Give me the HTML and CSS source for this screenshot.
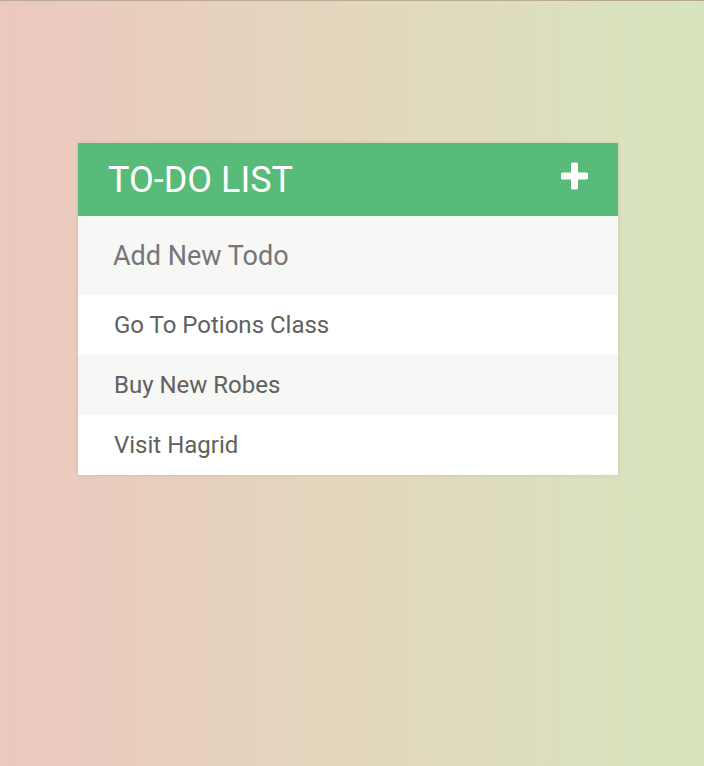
FILE: index.html
```html
<!DOCTYPE html>
<html lang="en">
<head>
<meta charset="utf-8">
<title>Todo List</title>
<link rel="stylesheet" href="styles.css">
</head>
<body>
<div class="topline"></div>
<main class="container">
  <h1 class="title">To-Do List
    <svg class="plus" viewBox="0 0 29 28" width="29" height="28" aria-hidden="true">
      <path d="M12.5 0.5h4a1.5 1.5 0 0 1 1.5 1.5v8.5h8.5a1.5 1.5 0 0 1 1.5 1.5v4a1.5 1.5 0 0 1 -1.5 1.5h-8.5v8.5a1.5 1.5 0 0 1 -1.5 1.5h-4a1.5 1.5 0 0 1 -1.5 -1.5v-8.5h-8.5a1.5 1.5 0 0 1 -1.5 -1.5v-4a1.5 1.5 0 0 1 1.5 -1.5h8.5v-8.5a1.5 1.5 0 0 1 1.5 -1.5z" fill="#fff"/>
    </svg>
  </h1>
  <input class="new-todo" type="text" placeholder="Add New Todo">
  <ul class="todos">
    <li class="todo">Go To Potions Class</li>
    <li class="todo">Buy New Robes</li>
    <li class="todo">Visit Hagrid</li>
  </ul>
</main>
</body>
</html>
```
FILE: styles.css
```css
html, body {
  margin: 0;
  padding: 0;
  height: 100%;
}
body {
  font-family: Roboto, "Liberation Sans", sans-serif;
  background: linear-gradient(to right, #ecc8be, #e3d7bd 50%, #d7e5be);
}
.topline {
  height: 1px;
  background: #b8a992;
}
.container {
  width: 540px;
  margin: 142px 0 0 78px;
  background: #f7f7f5;
  box-shadow: 0 0 4px rgba(0, 0, 0, 0.1);
}
.title {
  margin: 0;
  padding: 16px 30px 14px;
  background: #59bb79;
  color: #fff;
  font-size: 36px;
  font-weight: normal;
  line-height: 43px;
  text-transform: uppercase;
  display: flex;
  justify-content: space-between;
  align-items: center;
}
.plus {
  display: block;
  margin-right: -1px;
  margin-top: -10px;
}
.new-todo {
  display: block;
  width: 100%;
  box-sizing: border-box;
  font-family: Roboto, "Liberation Sans", sans-serif;
  font-size: 27px;
  height: 79px;
  padding: 0 20px 0 35px;
  border: 0;
  outline: none;
  background: #f7f7f5;
  color: #666;
}
.new-todo::placeholder {
  color: #75757a;
}
.todos {
  list-style: none;
  margin: 0;
  padding: 0;
}
.todo {
  height: 60px;
  line-height: 60px;
  padding-left: 36px;
  font-size: 24px;
  color: #616161;
  background: #fff;
}
.todo:nth-child(2n) {
  background: #f7f7f5;
}
```
